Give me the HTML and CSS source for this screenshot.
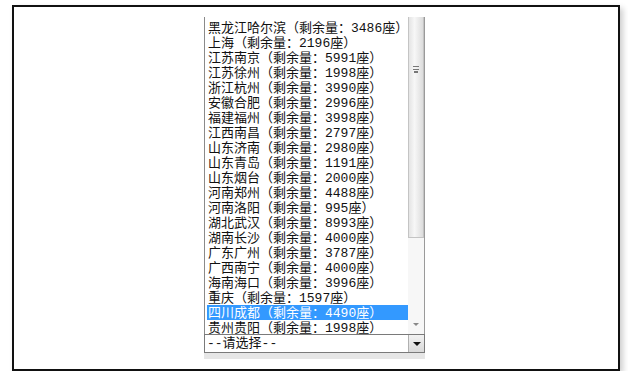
FILE: index.html
```html
<!DOCTYPE html>
<html lang="zh-CN">
<head>
  <meta charset="UTF-8">
  <title>选择城市</title>
  <link rel="stylesheet" href="styles.css">
</head>
<body>
  <div class="frame">
    <div class="dropdown">
      <div class="list">
        <div class="options">
          <div class="option">黑龙江哈尔滨（剩余量：3486座）</div>
          <div class="option">上海（剩余量：2196座）</div>
          <div class="option">江苏南京（剩余量：5991座）</div>
          <div class="option">江苏徐州（剩余量：1998座）</div>
          <div class="option">浙江杭州（剩余量：3990座）</div>
          <div class="option">安徽合肥（剩余量：2996座）</div>
          <div class="option">福建福州（剩余量：3998座）</div>
          <div class="option">江西南昌（剩余量：2797座）</div>
          <div class="option">山东济南（剩余量：2980座）</div>
          <div class="option">山东青岛（剩余量：1191座）</div>
          <div class="option">山东烟台（剩余量：2000座）</div>
          <div class="option">河南郑州（剩余量：4488座）</div>
          <div class="option">河南洛阳（剩余量：995座）</div>
          <div class="option">湖北武汉（剩余量：8993座）</div>
          <div class="option">湖南长沙（剩余量：4000座）</div>
          <div class="option">广东广州（剩余量：3787座）</div>
          <div class="option">广西南宁（剩余量：4000座）</div>
          <div class="option">海南海口（剩余量：3996座）</div>
          <div class="option">重庆（剩余量：1597座）</div>
          <div class="option selected">四川成都（剩余量：4490座）</div>
          <div class="option">贵州贵阳（剩余量：1998座）</div>
        </div>
        <div class="scrollbar">
          <div class="thumb"><span class="grip"></span></div>
          <div class="track"><span class="arrow-small"></span></div>
        </div>
      </div>
      <div class="select">
        <span class="select-text">--请选择--</span>
        <span class="select-btn"><span class="arrow"></span></span>
      </div>
      <div class="strip"></div>
    </div>
  </div>
</body>
</html>
```

FILE: styles.css
```css
body {
  margin: 0;
  background-color: #fff;
  font-family: "Liberation Mono", "Noto Sans CJK SC", monospace;
}
.frame {
  box-sizing: border-box;
  width: 608px;
  height: 366px;
  margin: 5px 0 0 12px;
  padding: 10px 0 0 190px;
  border: 2px solid #111;
  box-shadow: 3px 3px 6px rgba(0, 0, 0, 0.2);
  background-color: #fff;
}
.dropdown {
  width: 221px;
}
.list {
  display: flex;
  height: 317px;
  border-left: 1px solid #8a8a8a;
}
.options {
  flex: 1;
  padding-top: 3px;
  padding-left: 2px;
}
.option {
  height: 14px;
  padding-top: 1px;
  line-height: 15px;
  font-size: 13px;
  color: #111;
  white-space: nowrap;
  padding-left: 1px;
}
.option.selected {
  background-color: #3399ff;
  color: #fff;
}
.scrollbar {
  width: 16px;
  display: flex;
  flex-direction: column;
  border-right: 1px solid #9a9a9a;
  background-color: #f4f4f4;
}
.thumb {
  height: 220px;
  display: flex;
  justify-content: center;
  align-items: flex-start;
  background: linear-gradient(to right, #e4e4e4, #f7f7f7 40%, #dcdcdc);
  border: 1px solid #c4c4c4;
  border-top: none;
}
.grip {
  width: 6px;
  height: 2px;
  margin-top: 49px;
  border-top: 1px solid #777;
  border-bottom: 1px solid #777;
  box-shadow: 0 4px 0 -1px #777;
}
.track {
  flex: 1;
  display: flex;
  justify-content: center;
  align-items: flex-end;
  padding-bottom: 8px;
  background-color: #f7f7f7;
}
.arrow-small {
  width: 0;
  height: 0;
  border-left: 3px solid transparent;
  border-right: 3px solid transparent;
  border-top: 3px solid #888;
}
.select {
  display: flex;
  height: 17px;
  border: 1px solid #7a7a7a;
  background-color: #fff;
}
.select-text {
  flex: 1;
  padding-left: 2px;
  font-size: 13px;
  line-height: 17px;
  color: #111;
}
.select-btn {
  width: 15px;
  display: flex;
  justify-content: center;
  align-items: center;
  background: linear-gradient(#f2f2f2, #d9d9d9);
  border-left: 1px solid #b0b0b0;
}
.arrow {
  width: 0;
  height: 0;
  border-left: 4px solid transparent;
  border-right: 4px solid transparent;
  border-top: 4px solid #111;
}
.strip {
  height: 6px;
  background-color: #e6e6e6;
}
```
